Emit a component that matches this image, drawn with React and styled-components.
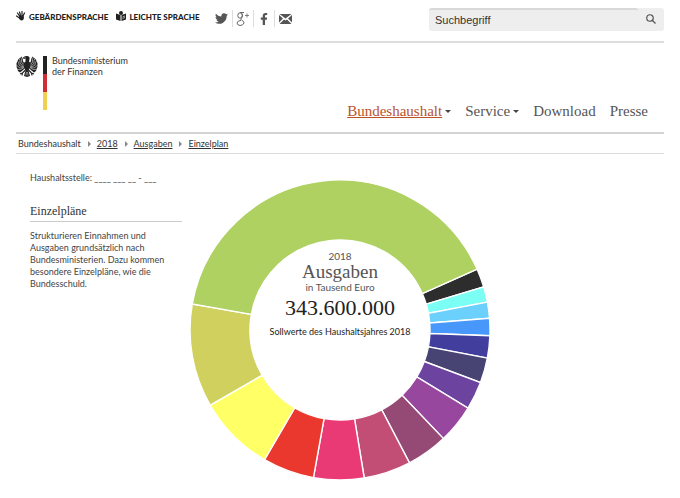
import * as React from "react"
import styled, { createGlobalStyle } from "styled-components";
import { FaTwitter, FaFacebookF } from "react-icons/fa";

const humanist = 'Lato, "Open Sans", sans-serif';
const serif = '"Liberation Serif", "Noto Serif", serif';

const GlobalStyle = createGlobalStyle`
  * {
    box-sizing: border-box;
  }
  body {
    margin: 0;
    background: #fff;
    color: #333;
    font-family: ${humanist};
    font-size: 9px;
    line-height: 12px;
  }
`;

const Page = styled.div`
  padding: 0 16px;
`;

const TopBar = styled.div`
  display: flex;
  align-items: flex-start;
  height: 43px;
  padding-top: 8px;
  border-bottom: 2px solid #ddd;
`;

const ServiceLinks = styled.nav`
  display: flex;
  gap: 8px;
`;

const ServiceLink = styled.a`
  display: flex;
  align-items: center;
  gap: 3px;
  height: 18px;
  color: #222;
  font-size: 8px;
  font-weight: 900;
  text-decoration: none;
  white-space: nowrap;

  svg {
    margin-bottom: 3px;
  }
`;

const SocialLinks = styled.div`
  display: flex;
  margin-left: 12px;
  padding-top: 2px;
`;

const SocialLink = styled.a`
  display: flex;
  align-items: center;
  justify-content: center;
  width: 21px;
  height: 17px;
  color: #555;

  & + & {
    border-left: 1px solid #ddd;
  }
`;

const SearchForm = styled.form`
  display: flex;
  align-items: center;
  width: 235px;
  height: 23px;
  margin-left: auto;
  border-radius: 3px;
  background: #eee;
`;

const SearchInput = styled.input`
  flex: 1;
  min-width: 0;
  height: 23px;
  padding: 0 6px 2px;
  border: 0;
  border-top: 2px solid #d8d8d8;
  border-radius: 3px;
  background: #eee;
  color: #333;
  font-family: "Liberation Sans", Arial, sans-serif;
  font-size: 11px;

  &::placeholder {
    color: #333;
    opacity: 1;
  }
`;

const SearchButton = styled.button`
  display: flex;
  padding: 0 8px 2px;
  border: 0;
  background: none;
  color: #555;
`;

const Header = styled.header`
  display: flex;
  justify-content: space-between;
  height: 91px;
  padding-top: 12px;
  border-bottom: 2px solid #d4d4d4;
`;

const Brand = styled.a`
  display: flex;
  align-items: flex-start;
  color: #333;
  line-height: 11px;
  text-decoration: none;
`;

const FlagBar = styled.span`
  width: 4px;
  height: 54px;
  margin: 1px 5px 0;
  background: linear-gradient(#222 0 18px, #cf2e36 18px 36px, #efd050 36px);
`;

const MainNav = styled.nav`
  display: flex;
  align-items: flex-end;
  gap: 14px;
  padding: 0 16px 12px 0;
`;

const NavLink = styled.a`
  display: flex;
  align-items: center;
  gap: 3px;
  color: #555;
  font-family: ${serif};
  font-size: 15px;
  line-height: 18px;
  text-decoration: none;

  span {
    color: ${(props) => (props.$active ? '#b9532a' : '#555')};
    text-decoration: ${(props) => (props.$active ? 'underline' : 'none')};
  }
`;

const Caret = styled.i`
  border: 3px solid transparent;
  border-top-color: #444;
  border-bottom: 0;
`;

const Crumbs = styled.ol`
  display: flex;
  align-items: center;
  height: 20px;
  margin: 0;
  padding: 0 2px;
  border-bottom: 1px solid #ddd;
  list-style: none;
`;

const Crumb = styled.li`
  display: flex;
  align-items: center;

  a {
    color: #333;
  }

  & + &::before {
    content: "";
    margin: 0 6px 0 7px;
    border: 3px solid transparent;
    border-left-color: #888;
    border-right: 0;
  }
`;

const Content = styled.main`
  display: grid;
  grid-template-columns: 1fr 300px 1fr;
  padding-top: 18px;
`;

const Sidebar = styled.aside`
  padding: 0 8px 0 14px;
  color: #444;
`;

const Position = styled.p`
  margin: 0;
`;

const SidebarTitle = styled.h2`
  margin: 19px 0 8px;
  padding-bottom: 2px;
  border-bottom: 1px solid #ccc;
  color: #333;
  font-family: ${serif};
  font-size: 12px;
  font-weight: 400;
  line-height: 16px;
`;

const SidebarText = styled.p`
  max-width: 140px;
  margin: 0;
`;

const ChartArea = styled.section`
  display: grid;
  padding-top: 8px;

  > * {
    grid-area: 1 / 1;
  }
`;

const Summary = styled.div`
  display: flex;
  flex-direction: column;
  align-items: center;
  padding-top: 70px;
  color: #555;
  font-size: 10px;
`;

const SummaryTitle = styled.h1`
  margin: 0;
  font-family: ${serif};
  font-size: 19px;
  font-weight: 400;
  line-height: 19px;
`;

const Amount = styled.strong`
  margin: 5px 0 8px;
  color: #222;
  font-family: ${serif};
  font-size: 22px;
  font-weight: 400;
  line-height: 20px;
`;

const Note = styled.span`
  color: #222;
  font-size: 9px;
`;

// end angles in degrees, clockwise from three o'clock
const START_ANGLE = -23.9;
const slices = [
  { end: -16.7, color: '#2d2d2d' },
  { end: -10.7, color: '#7bfff5' },
  { end: -4.5, color: '#6bd0fb' },
  { end: 2.2, color: '#4798fa' },
  { end: 10.8, color: '#413e9e' },
  { end: 20.5, color: '#474372' },
  { end: 31.4, color: '#6c439f' },
  { end: 46.4, color: '#98479e' },
  { end: 62.4, color: '#944a74' },
  { end: 80.7, color: '#c24e76' },
  { end: 100.2, color: '#e93a76' },
  { end: 120.2, color: '#eb382f' },
  { end: 149.9, color: '#ffff66' },
  { end: 190, color: '#d0d05f' },
  { end: 336.1, color: '#aed161' },
];

const point = (radius, angle) => {
  const rad = (angle * Math.PI) / 180;
  return `${150 + radius * Math.cos(rad)} ${150 + radius * Math.sin(rad)}`;
};

const slicePath = (from, to) => {
  const large = to - from > 180 ? 1 : 0;
  return `M${point(150, from)} A150 150 0 ${large} 1 ${point(150, to)} L${point(90, to)} A90 90 0 ${large} 0 ${point(90, from)}Z`;
};

const Donut = () => (
  <svg width="300" height="300" viewBox="0 0 300 300" role="img" aria-label="Ausgaben nach Einzelplan">
    {slices.map((slice, i) => (
      <path
        key={slice.color}
        d={slicePath(i ? slices[i - 1].end : START_ANGLE, slice.end)}
        fill={slice.color}
        stroke="#fff"
        strokeWidth="1.4"
      />
    ))}
  </svg>
);

const Wing = () => (
  <g>
    <path
      d="M19 15 Q15 17 14 12 Q14 6 11 3 Q3 8 1 17 Q0 25 4 32 L8 35 Q14 31 18 26Z"
      fill="#222"
    />
    <path
      d="M9 4 Q12 8 11 14 Q12 18 17 19 M6 7 Q9 11 8 16 Q10 21 16 21 M3 12 Q6 15 6 20 Q10 24 16 23 M1 20 Q4 24 8 26 Q12 26 16 24 M2 28 Q6 30 10 29 L16 25"
      fill="none"
      stroke="#fff"
      strokeWidth="1"
    />
  </g>
);

const Eagle = () => (
  <svg width="22" height="22" viewBox="0 0 44 44" aria-hidden="true">
    <Wing />
    <g transform="translate(44 0) scale(-1 1)"><Wing /></g>
    <path d="M19 8 L15 8 L14 5 Q17 1 23 2 Q28 3 27 8 L26 13 Q31 17 28 25 L25 31 L28 42 L22 44 L16 42 L19 31 L16 25 Q13 17 19 13Z" fill="#222" />
    <path d="M19 30 L13 36 L8 38 M13 36 L12 41 M25 30 L31 36 L36 38 M31 36 L32 41" fill="none" stroke="#222" strokeWidth="2.4" />
    <path d="M16 6 H20 M21 34 L20 41 M23 34 L24 41" stroke="#fff" strokeWidth="1" />
  </svg>
);

const HandIcon = () => (
  <svg width="10" height="10" viewBox="0 0 20 20" fill="none" stroke="#222" strokeWidth="2.4" strokeLinecap="round" aria-hidden="true">
    <path d="M7 10 L3 4 M9 9 L7 2 M12 9 L12 1 M14 10 L17 4 M7 14 L1 10" />
    <path d="M6 9 L15 9 L16 14 Q15 19 11 19 Q8 19 6 15Z" fill="#222" stroke="none" />
  </svg>
);

const ReaderIcon = () => (
  <svg width="10" height="10" viewBox="0 0 20 20" fill="#222" aria-hidden="true">
    <circle cx="10" cy="4" r="4" />
    <path d="M0 5 L9 8 V20 L0 17Z M20 5 L11 8 V20 L20 17Z" />
    <path d="M13 12 L18 10 M13 15 L18 13" stroke="#fff" strokeWidth="1.2" />
  </svg>
);

const GooglePlusIcon = () => (
  <svg width="14" height="14" viewBox="0 0 28 28" fill="none" stroke="#666" strokeWidth="2" aria-hidden="true">
    <ellipse cx="8" cy="7" rx="4.5" ry="5.5" />
    <path d="M8 1 H16 M12 3 Q15 8 11 12 Q8 15 11 16 Q17 19 16 22 Q14 27 8 27 Q2 26 2 22 Q3 17 10 17" />
    <path d="M22 3 V11 M18 7 H26" strokeWidth="1.6" />
  </svg>
);

const MailIcon = () => (
  <svg width="13" height="10" viewBox="0 0 26 20" fill="#555" aria-hidden="true">
    <path d="M1 0 H25 L13 9Z M0 2 L8 9 L0 17Z M26 2 L18 9 L26 17Z M10 11 L13 13 L16 11 L25 20 H1Z" />
  </svg>
);

const SearchIcon = () => (
  <svg width="10" height="10" viewBox="0 0 20 20" fill="none" stroke="currentColor" strokeWidth="2.4" aria-hidden="true">
    <circle cx="8" cy="8" r="6.5" />
    <path d="M13 13 L19 19" />
  </svg>
);

const navItems = [
  { label: 'Bundeshaushalt', active: true, menu: true },
  { label: 'Service', menu: true },
  { label: 'Download' },
  { label: 'Presse' },
];

export default function App() {
  return (
    <Page>
      <GlobalStyle />
      <TopBar>
        <ServiceLinks>
          <ServiceLink href="#gebaerdensprache"><HandIcon />GEBÄRDENSPRACHE</ServiceLink>
          <ServiceLink href="#leichte-sprache"><ReaderIcon />LEICHTE SPRACHE</ServiceLink>
        </ServiceLinks>
        <SocialLinks>
          <SocialLink href="#twitter" aria-label="Twitter"><FaTwitter size={13} /></SocialLink>
          <SocialLink href="#google" aria-label="Google Plus"><GooglePlusIcon /></SocialLink>
          <SocialLink href="#facebook" aria-label="Facebook"><FaFacebookF size={12} /></SocialLink>
          <SocialLink href="#mail" aria-label="E-Mail"><MailIcon /></SocialLink>
        </SocialLinks>
        <SearchForm role="search">
          <SearchInput type="text" placeholder="Suchbegriff" aria-label="Suchbegriff" />
          <SearchButton type="button" aria-label="Suchen"><SearchIcon /></SearchButton>
        </SearchForm>
      </TopBar>
      <Header>
        <Brand href="#start">
          <Eagle />
          <FlagBar />
          <span>Bundesministerium<br />der Finanzen</span>
        </Brand>
        <MainNav>
          {navItems.map((item) => (
            <NavLink key={item.label} href={`#${item.label}`} $active={item.active}>
              <span>{item.label}</span>
              {item.menu && <Caret />}
            </NavLink>
          ))}
        </MainNav>
      </Header>
      <Crumbs>
        <Crumb>Bundeshaushalt</Crumb>
        <Crumb><a href="#2018">2018</a></Crumb>
        <Crumb><a href="#ausgaben">Ausgaben</a></Crumb>
        <Crumb><a href="#einzelplan">Einzelplan</a></Crumb>
      </Crumbs>
      <Content>
        <Sidebar>
          <Position>Haushaltsstelle: ____ ___ __ - ___</Position>
          <SidebarTitle>Einzelpläne</SidebarTitle>
          <SidebarText>
            Strukturieren Einnahmen und Ausgaben grundsätzlich nach Bundesministerien. Dazu kommen
            besondere Einzelpläne, wie die Bundesschuld.
          </SidebarText>
        </Sidebar>
        <ChartArea>
          <Donut />
          <Summary>
            <span>2018</span>
            <SummaryTitle>Ausgaben</SummaryTitle>
            <span>in Tausend Euro</span>
            <Amount>343.600.000</Amount>
            <Note>Sollwerte des Haushaltsjahres 2018</Note>
          </Summary>
        </ChartArea>
      </Content>
    </Page>
  );
}
